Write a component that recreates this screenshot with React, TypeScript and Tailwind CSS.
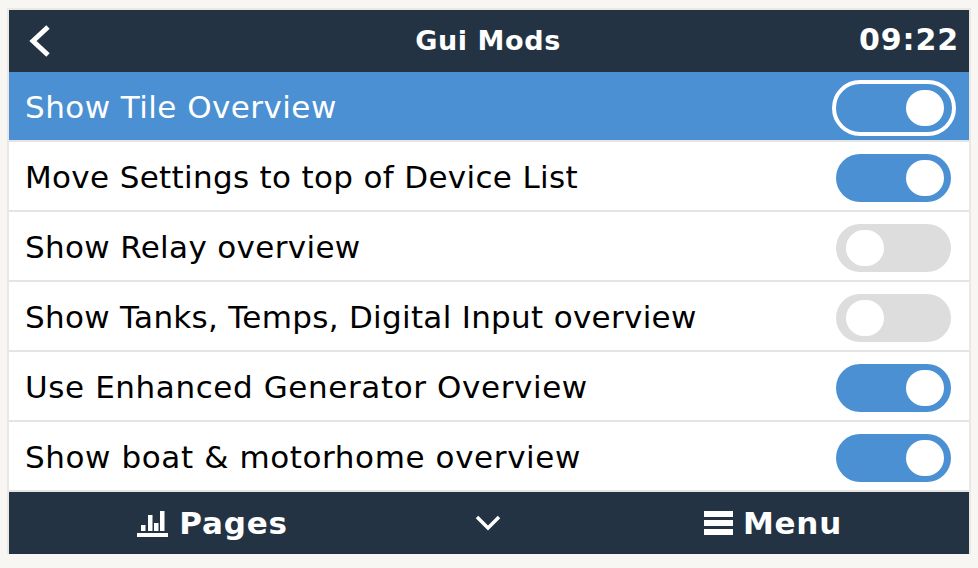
const rows = [
  { label: 'Show Tile Overview', on: true, selected: true, spacing: 'tracking-[0.45px]' },
  { label: 'Move Settings to top of Device List', on: true, spacing: 'tracking-[0.33px]' },
  { label: 'Show Relay overview', on: false, spacing: 'tracking-[0.34px]' },
  { label: 'Show Tanks, Temps, Digital Input overview', on: false, spacing: 'tracking-[0.3px]' },
  { label: 'Use Enhanced Generator Overview', on: true, spacing: 'tracking-[0.6px]' },
  { label: 'Show boat & motorhome overview', on: true, spacing: 'tracking-[0.6px]' },
]

function Toggle({ on, selected }: { on: boolean; selected?: boolean }) {
  if (selected) {
    return (
      <div className="mt-[4px] flex h-[56px] w-[124px] items-center justify-end rounded-full border-[4px] border-white pr-[8px]">
        <div className="h-[36px] w-[38px] rounded-full bg-white" />
      </div>
    )
  }
  return (
    <div
      className={
        on
          ? 'mr-[5px] mt-[4px] flex h-[48px] w-[115px] items-center justify-end rounded-full bg-[#4a90d2] pr-[7px]'
          : 'mr-[5px] mt-[4px] flex h-[48px] w-[115px] items-center justify-start rounded-full bg-[#dddddd] pl-[10px]'
      }
    >
      <div className="h-[36px] w-[38px] rounded-full bg-white" />
    </div>
  )
}

export default function App() {
  return (
    <div className="h-[568px] w-[978px] bg-[#f8f6f3] pl-[7px] pt-[8px] font-['DejaVu_Sans',sans-serif]">
      <div className="h-[546px] w-[964px] border-x-2 border-t-2 border-[#ebe8e4] bg-white">
        <div className="flex h-[62px] items-center bg-[#233343] pl-[18px] pr-[10px] text-white">
          <div className="flex flex-1 items-center">
            <svg width="24" height="34" viewBox="0 0 24 34" fill="none" stroke="white" strokeWidth="5">
              <path d="M21 3 L6 17 L21 31" />
            </svg>
          </div>
          <span className="mr-[10px] pb-[2px] text-[27px] font-bold leading-none tracking-[0.6px]">Gui Mods</span>
          <div className="flex flex-1 justify-end">
            <span className="pb-[2px] text-[30px] font-bold leading-none tracking-[0.9px]">09:22</span>
          </div>
        </div>
        {rows.map((row) => (
          <div
            key={row.label}
            className={
              row.selected
                ? 'flex h-[70px] items-center justify-between border-b-2 border-[#e4e4e4] bg-[#4a90d2] pl-[16px] pr-[13px] text-white'
                : 'flex h-[70px] items-center justify-between border-b-2 border-[#e4e4e4] bg-white pl-[16px] pr-[13px] text-black'
            }
          >
            <span className={`pt-[2px] text-[31px] leading-none ${row.spacing}`}>{row.label}</span>
            <Toggle on={row.on} selected={row.selected} />
          </div>
        ))}
        <div className="flex h-[62px] items-center bg-[#233343] text-white">
          <div className="flex w-[407px] items-center justify-center gap-[10px]">
            <svg width="32" height="28" viewBox="0 0 32 28" fill="white">
              <rect x="0" y="24" width="31" height="4" />
              <rect x="4" y="16" width="4.5" height="6" />
              <rect x="11" y="6" width="4.5" height="16" />
              <rect x="17" y="14" width="4.5" height="8" />
              <rect x="23" y="2" width="4.5" height="20" />
            </svg>
            <span className="text-[31px] font-bold leading-none tracking-[0.8px]">Pages</span>
          </div>
          <div className="flex w-[143px] items-center justify-center">
            <svg width="26" height="16" viewBox="0 0 26 16" fill="none" stroke="white" strokeWidth="3.5">
              <path d="M2 2 L13 13 L24 2" />
            </svg>
          </div>
          <div className="flex flex-1 items-center justify-center gap-[10px] pl-[18px]">
            <svg width="29" height="24" viewBox="0 0 29 24" fill="white">
              <rect x="0" y="0" width="29" height="6" />
              <rect x="0" y="9" width="29" height="6" />
              <rect x="0" y="18" width="29" height="6" />
            </svg>
            <span className="text-[31px] font-bold leading-none tracking-[0.8px]">Menu</span>
          </div>
        </div>
      </div>
    </div>
  )
}
